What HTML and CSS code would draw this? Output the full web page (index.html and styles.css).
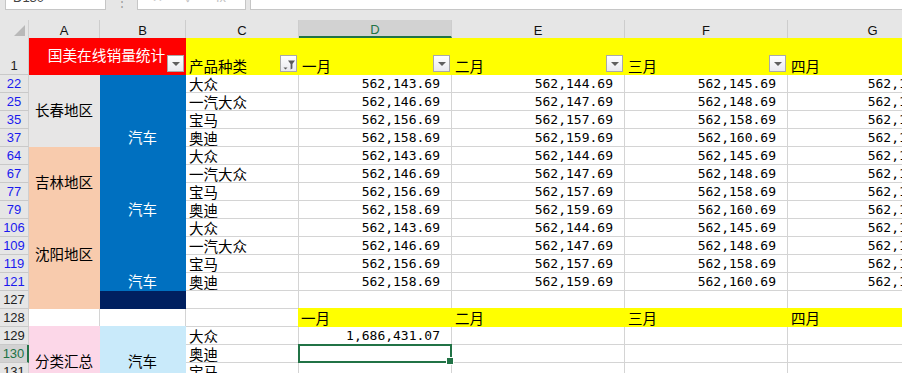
FILE: index.html
```html
<!DOCTYPE html>
<html lang="zh-CN">
<head>
    <meta charset="UTF-8">
    <title>国美在线销量统计</title>
    <link rel="stylesheet" href="styles.css">
</head>
<body>
    <div class="toolbar">
        <div class="namebox"><span>D130</span></div>
        <div class="dots">⋮</div>
        <div class="fxbox"><span>✕</span><span>✓</span><span>fx</span></div>
        <div class="formula"></div>
    </div>
    <div class="band"></div>

    <div class="sheet">
        <!-- column headers -->
        <div class="corner"><div class="tri"></div></div>
        <div class="ch">A</div>
        <div class="ch">B</div>
        <div class="ch">C</div>
        <div class="ch sel">D</div>
        <div class="ch">E</div>
        <div class="ch">F</div>
        <div class="ch">G</div>

        <!-- row 1 -->
        <div class="rh">1</div>
        <div class="c f red a1">
            <span class="title">国美在线销量统计</span>
            <span class="btn"><i class="arrow"></i></span>
        </div>
        <div class="c f yel">产品种类<span class="btn"><svg width="14" height="14" viewBox="0 0 14 14"><path d="M1.5 10.5h4l-2 2z" fill="#5a5a5a"/><path d="M6 3.5h7l-2.6 3.6v4.4l-1.8 1v-5.4z" fill="#5a5a5a"/></svg></span></div>
        <div class="c f yel">一月<span class="btn"><i class="arrow"></i></span></div>
        <div class="c f yel">二月<span class="btn"><i class="arrow"></i></span></div>
        <div class="c f yel">三月<span class="btn"><i class="arrow"></i></span></div>
        <div class="c f yel">四月</div>

        <!-- 长春 -->
        <div class="rh link">22</div>
        <div class="c f gray mid span4">长春地区</div>
        <div class="c f blue car span4">汽车</div>
        <div class="c">大众</div>
        <div class="c n">562,143.69</div>
        <div class="c n">562,144.69</div>
        <div class="c n">562,145.69</div>
        <div class="c n">562,146.69</div>

        <div class="rh link">25</div>
        <div class="c">一汽大众</div>
        <div class="c n">562,146.69</div>
        <div class="c n">562,147.69</div>
        <div class="c n">562,148.69</div>
        <div class="c n">562,149.69</div>

        <div class="rh link">35</div>
        <div class="c">宝马</div>
        <div class="c n">562,156.69</div>
        <div class="c n">562,157.69</div>
        <div class="c n">562,158.69</div>
        <div class="c n">562,159.69</div>

        <div class="rh link">37</div>
        <div class="c">奥迪</div>
        <div class="c n">562,158.69</div>
        <div class="c n">562,159.69</div>
        <div class="c n">562,160.69</div>
        <div class="c n">562,161.69</div>

        <!-- 吉林 -->
        <div class="rh link">64</div>
        <div class="c f peach mid span4">吉林地区</div>
        <div class="c f blue car span4">汽车</div>
        <div class="c">大众</div>
        <div class="c n">562,143.69</div>
        <div class="c n">562,144.69</div>
        <div class="c n">562,145.69</div>
        <div class="c n">562,146.69</div>

        <div class="rh link">67</div>
        <div class="c">一汽大众</div>
        <div class="c n">562,146.69</div>
        <div class="c n">562,147.69</div>
        <div class="c n">562,148.69</div>
        <div class="c n">562,149.69</div>

        <div class="rh link">77</div>
        <div class="c">宝马</div>
        <div class="c n">562,156.69</div>
        <div class="c n">562,157.69</div>
        <div class="c n">562,158.69</div>
        <div class="c n">562,159.69</div>

        <div class="rh link">79</div>
        <div class="c">奥迪</div>
        <div class="c n">562,158.69</div>
        <div class="c n">562,159.69</div>
        <div class="c n">562,160.69</div>
        <div class="c n">562,161.69</div>

        <!-- 沈阳 -->
        <div class="rh link">106</div>
        <div class="c f peach mid span4">沈阳地区</div>
        <div class="c f blue car span4">汽车</div>
        <div class="c">大众</div>
        <div class="c n">562,143.69</div>
        <div class="c n">562,144.69</div>
        <div class="c n">562,145.69</div>
        <div class="c n">562,146.69</div>

        <div class="rh link">109</div>
        <div class="c">一汽大众</div>
        <div class="c n">562,146.69</div>
        <div class="c n">562,147.69</div>
        <div class="c n">562,148.69</div>
        <div class="c n">562,149.69</div>

        <div class="rh link">119</div>
        <div class="c">宝马</div>
        <div class="c n">562,156.69</div>
        <div class="c n">562,157.69</div>
        <div class="c n">562,158.69</div>
        <div class="c n">562,159.69</div>

        <div class="rh link">121</div>
        <div class="c">奥迪</div>
        <div class="c n">562,158.69</div>
        <div class="c n">562,159.69</div>
        <div class="c n">562,160.69</div>
        <div class="c n">562,161.69</div>

        <div class="rh">127</div>
        <div class="c f peach"></div>
        <div class="c f navy"></div>
        <div class="c"></div>
        <div class="c"></div>
        <div class="c"></div>
        <div class="c"></div>
        <div class="c"></div>

        <!-- 汇总 -->
        <div class="rh">128</div>
        <div class="c"></div>
        <div class="c"></div>
        <div class="c"></div>
        <div class="c f yel ol ot">一月</div>
        <div class="c f yel ot">二月</div>
        <div class="c f yel ot">三月</div>
        <div class="c f yel ot">四月</div>

        <div class="rh">129</div>
        <div class="c f pink mid span4 ot">分类汇总</div>
        <div class="c f sky mid span4 ot">汽车</div>
        <div class="c">大众</div>
        <div class="c n">1,686,431.07</div>
        <div class="c"></div>
        <div class="c"></div>
        <div class="c"></div>

        <div class="rh cur">130</div>
        <div class="c">奥迪</div>
        <div class="c active"></div>
        <div class="c"></div>
        <div class="c"></div>
        <div class="c"></div>

        <div class="rh">131</div>
        <div class="c">宝马</div>
        <div class="c"></div>
        <div class="c"></div>
        <div class="c"></div>
        <div class="c"></div>

        <div class="rh">132</div>
        <div class="c">一汽大众</div>
        <div class="c"></div>
        <div class="c"></div>
        <div class="c"></div>
        <div class="c"></div>
    </div>
</body>
</html>
```

FILE: styles.css
```css
* {
    box-sizing: border-box;
}

body {
    margin: 0;
    width: 902px;
    height: 373px;
    overflow: hidden;
    background: #fff;
    font-family: "Noto Sans CJK SC", sans-serif;
}

/* formula bar strip, only its lower edge is in view */
.toolbar {
    display: flex;
    height: 10px;
    background: #e6e6e6;
}

.namebox,
.fxbox,
.formula {
    height: 10px;
    background: #fff;
    border: 1px solid #c6c6c6;
    border-top: none;
    overflow: hidden;
    display: flex;
    align-items: flex-end;
}

.namebox {
    margin-left: 5px;
    width: 101px;
    padding-left: 7px;
    font: 13px/13px "Liberation Sans", sans-serif;
    color: #444;
}

.namebox span {
    margin-bottom: 5px;
}

.dots {
    width: 31px;
    text-align: center;
    font: 12px/4px "Liberation Sans", sans-serif;
    color: #999;
}

.fxbox {
    width: 109px;
    gap: 22px;
    padding-left: 14px;
    font: 13px/13px "Liberation Sans", sans-serif;
    color: #c4c4c4;
}

.fxbox span {
    margin-bottom: 5px;
}

.formula {
    flex: 1;
    margin-left: 4px;
    border-right: none;
}

.band {
    height: 10px;
    background: #e6e6e6;
}

/* the grid */
.sheet {
    display: grid;
    width: 958px;
    grid-template-columns: 29px 71px 86px 113px 153px 173px 163px 170px;
    grid-template-rows: 18px 37px repeat(18, 18px);
}

.corner {
    background: #e6e6e6;
    border-right: 1px solid #d0d0d0;
    display: flex;
    justify-content: flex-end;
    align-items: flex-end;
    padding: 0 3px 2px 0;
}

.tri {
    width: 0;
    height: 0;
    border-left: 11px solid transparent;
    border-bottom: 11px solid #b9b9b9;
}

.ch {
    background: #e6e6e6;
    border-right: 1px solid #cdcdcd;
    font: 13px/18px "Liberation Sans", sans-serif;
    color: #111;
    text-align: center;
    padding-top: 2px;
}

.ch.sel {
    background: #d2d2d2;
    color: #217346;
    border-bottom: 2px solid #217346;
    line-height: 16px;
}

.rh {
    background: #e6e6e6;
    border-right: 1px solid #cfcfcf;
    border-bottom: 1px solid #c9c9c9;
    font: 13px/13px "Liberation Sans", sans-serif;
    color: #222;
    display: flex;
    justify-content: center;
    align-items: flex-end;
    padding-bottom: 2px;
}

.rh.link {
    color: #1a1aee;
}

.rh.cur {
    background: #d2d2d2;
    color: #217346;
    border-right: 2px solid #217346;
}

/* cells */
.c {
    border-right: 1px solid #d4d4d4;
    border-bottom: 1px solid #d4d4d4;
    display: flex;
    align-items: flex-end;
    padding: 0 3px 1px;
    font-size: 14.5px;
    line-height: 1;
    color: #000;
    white-space: nowrap;
    overflow: hidden;
    position: relative;
}

.c.n {
    justify-content: flex-end;
    padding-right: 11px;
    padding-bottom: 2px;
    font-family: "DejaVu Sans Mono", monospace;
    font-size: 13px;
}

.f {
    border-color: transparent;
}

.ol {
    margin-left: -1px;
}

.ot {
    margin-top: -1px;
}

.span4 {
    grid-row: span 4;
}

.mid {
    justify-content: center;
    align-items: center;
}

.car {
    justify-content: center;
    color: #fff;
    padding-bottom: 2px;
}

.red { background: #ff0000; }
.yel { background: #ffff00; padding-right: 1px; }
.gray { background: #e7e6e6; }
.peach { background: #f8cbad; }
.blue { background: #0070c0; }
.navy { background: #002060; }
.pink { background: #fcd7e8; }
.sky { background: #c9eafa; }

.a1 {
    grid-column: span 2;
    display: grid;
    padding: 0 1px 1px 0;
}

.a1 > * {
    grid-area: 1 / 1;
}

.title {
    place-self: center;
    color: #fff;
    font-size: 14.7px;
}

.btn {
    place-self: end;
    margin-left: auto;
    margin-bottom: 1px;
    width: 17px;
    height: 17px;
    flex: none;
    border: 1px solid #a9a9a9;
    background: linear-gradient(#ffffff, #e9e9ee);
    display: flex;
    align-items: center;
    justify-content: center;
}

.arrow {
    width: 0;
    height: 0;
    border-left: 4px solid transparent;
    border-right: 4px solid transparent;
    border-top: 4px solid #5f5f5f;
}

/* selected cell D130 */
.c.active {
    overflow: visible;
    z-index: 2;
}

.c.active::after {
    content: "";
    position: absolute;
    top: -1px;
    left: -1px;
    right: -1px;
    bottom: -1px;
    border: 2px solid #217346;
}

.c.active::before {
    content: "";
    position: absolute;
    right: -3px;
    bottom: -3px;
    width: 6px;
    height: 6px;
    background: #217346;
    border: 1px solid #fff;
    z-index: 3;
}
```
